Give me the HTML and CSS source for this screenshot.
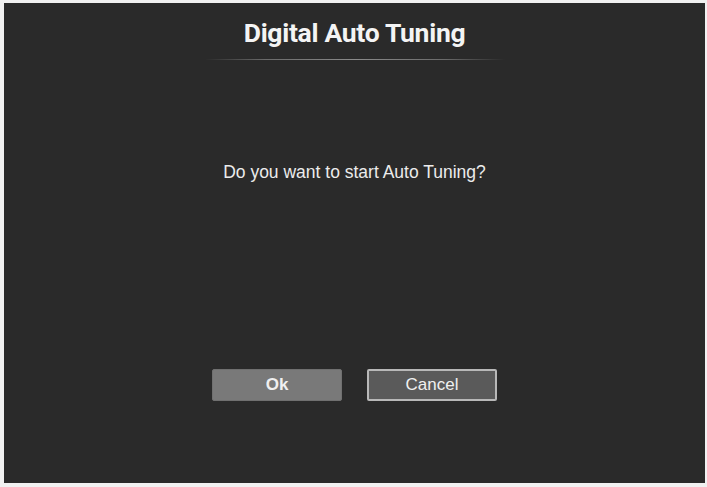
FILE: index.html
```html
<!DOCTYPE html>
<html>
<head>
<meta charset="utf-8">
<link rel="stylesheet" href="styles.css">
</head>
<body>
<div class="screen">
  <h1 class="title">Digital Auto Tuning</h1>
  <div class="divider"></div>
  <p class="message">Do you want to start Auto Tuning?</p>
  <div class="actions">
    <button class="btn btn-primary">Ok</button>
    <button class="btn btn-secondary">Cancel</button>
  </div>
</div>
</body>
</html>
```
FILE: styles.css
```css
html, body {
  margin: 0;
  padding: 0;
  background: #f1f1f1;
}
.screen {
  margin: 3px 2px 0 4px;
  height: 480px;
  background: #2a2a2a;
  display: flex;
  flex-direction: column;
  align-items: center;
  box-sizing: border-box;
  padding-top: 14px;
}
.title {
  margin: 0;
  font-family: Roboto, "Liberation Sans", sans-serif;
  font-weight: 700;
  font-size: 26.5px;
  line-height: 32px;
  color: #f4f4f4;
  letter-spacing: -0.3px;
}
.divider {
  margin-top: 10px;
  width: 300px;
  height: 1px;
  background: linear-gradient(to right, rgba(130,130,130,0), #6a6a6a 20%, #8a8a8a 50%, #6a6a6a 80%, rgba(130,130,130,0));
}
.message {
  margin: 101px 0 0;
  font-family: "Liberation Sans", Arial, sans-serif;
  font-size: 17.5px;
  line-height: 22px;
  color: #ececec;
}
.actions {
  margin-top: 186px;
  display: flex;
  gap: 25px;
}
.btn {
  width: 130px;
  height: 32px;
  border-radius: 2px;
  font-family: "Liberation Sans", Arial, sans-serif;
  font-size: 17px;
  color: #f0f0f0;
  padding: 0;
  box-sizing: border-box;
}
.btn-primary {
  background: #797979;
  border: 1px solid #707070;
  font-weight: 700;
}
.btn-secondary {
  background: #5a5a5a;
  border: 2px solid #b8b8b8;
}
```
